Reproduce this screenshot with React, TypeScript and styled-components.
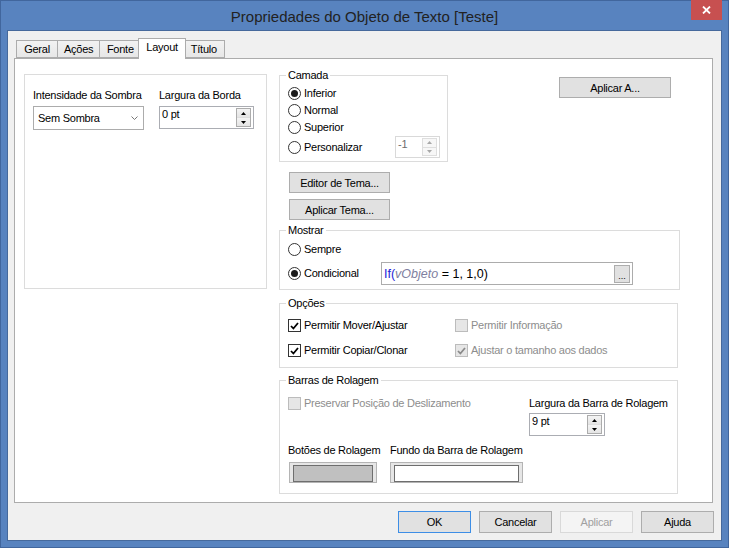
import React from 'react';
import styled, { createGlobalStyle } from 'styled-components';

const GlobalStyle = createGlobalStyle`
  html, body { margin: 0; padding: 0; }
  body {
    font-family: "Liberation Sans", Arial, sans-serif;
    font-size: 11px;
    letter-spacing: -0.25px;
    color: #000;
  }
  * { box-sizing: border-box; }
`;

const Window = styled.div`
  width: 729px;
  height: 548px;
  display: flex;
  flex-direction: column;
  background: #5883bf;
  border: 1px solid #41669d;
`;

const TitleBar = styled.div`
  height: 29px;
  display: grid;
  grid-template-columns: 1fr auto 1fr;
  align-items: center;
`;

const Title = styled.div`
  grid-column: 2;
  font-size: 15px;
  letter-spacing: 0;
  color: #222;
  padding-top: 1px;
`;

const CloseButton = styled.div`
  grid-column: 3;
  justify-self: end;
  align-self: start;
  width: 31px;
  height: 20px;
  margin: -1px 6px 0 0;
  background: #c75050;
  display: flex;
  align-items: center;
  justify-content: center;
`;

const Client = styled.div`
  margin: 0 6px 6px 6px;
  flex: 1;
  display: flex;
  flex-direction: column;
  background: #f0f0f0;
  border: 1px solid #46699c;
  padding: 7px 7px 7px 6px;
`;

const TabStrip = styled.div`
  display: flex;
  align-items: flex-end;
  height: 20px;
  padding-left: 2px;
  position: relative;
  z-index: 1;
`;

const Tab = styled.div<{ $active?: boolean }>`
  height: ${({ $active }) => ($active ? '21px' : '18px')};
  min-width: ${({ $active }) => ($active ? '46px' : '42px')};
  margin: ${({ $active }) => ($active ? '0 -2px -1px -3px' : '0 0 0 -1px')};
  padding: ${({ $active }) => ($active ? '0 7px 4px' : '0 6px')};
  display: flex;
  align-items: center;
  justify-content: center;
  border: 1px solid #acacac;
  border-bottom: ${({ $active }) => ($active ? 'none' : '1px solid #acacac')};
  background: ${({ $active }) => ($active ? '#fff' : 'linear-gradient(#f2f2f2, #e7e7e7)')};
  position: relative;
  z-index: ${({ $active }) => ($active ? 2 : 0)};

  &:first-child {
    margin-left: 0;
  }
`;

const Panel = styled.div`
  height: 445px;
  margin-right: 1px;
  background: #fff;
  border: 1px solid #acacac;
  display: flex;
  align-items: flex-start;
  gap: 12px;
  padding: 10px 0 0 9px;
`;

const LeftBox = styled.div`
  width: 243px;
  height: 215px;
  margin-top: 5px;
  border: 1px solid #dcdcdc;
  padding: 14px 0 0 8px;
  display: flex;
  gap: 15px;
  align-items: flex-start;
`;

const Field = styled.div<{ $gap?: number; $width?: number }>`
  display: flex;
  flex-direction: column;
  gap: ${({ $gap }) => $gap ?? 4}px;
  align-items: flex-start;
  width: ${({ $width }) => ($width ? `${$width}px` : 'auto')};
`;

const Label = styled.span<{ $disabled?: boolean }>`
  line-height: 13px;
  white-space: nowrap;
  color: ${({ $disabled }) => ($disabled ? '#8d8d8d' : '#000')};
`;

const Select = styled.div`
  width: 111px;
  height: 24px;
  border: 1px solid #acacac;
  background: #fff;
  display: flex;
  align-items: center;
  justify-content: space-between;
  padding: 0 5px 0 4px;
`;

const SpinWrap = styled.div<{ $width: number; $height: number; $disabled?: boolean }>`
  width: ${({ $width }) => $width}px;
  height: ${({ $height }) => $height}px;
  border: 1px solid ${({ $disabled }) => ($disabled ? '#d9d9d9' : '#abadb3')};
  background: #fff;
  display: flex;
  justify-content: space-between;
  padding: 1px;
  color: ${({ $disabled }) => ($disabled ? '#6d6d6d' : '#000')};
`;

const SpinValue = styled.span`
  line-height: 13px;
  padding-left: 1px;
`;

const SpinButtons = styled.div<{ $disabled?: boolean }>`
  width: 15px;
  display: flex;
  flex-direction: column;
  border: 1px solid ${({ $disabled }) => ($disabled ? '#dedede' : '#acacac')};
  margin: 0 1px 0 0;
`;

const SpinHalf = styled.div<{ $disabled?: boolean }>`
  flex: 1;
  display: flex;
  align-items: center;
  justify-content: center;
  background: ${({ $disabled }) => ($disabled ? '#f7f7f7' : 'linear-gradient(#f4f4f4, #e4e4e4)')};

  & + & {
    border-top: 1px solid ${({ $disabled }) => ($disabled ? '#dedede' : '#acacac')};
  }
`;

const SpinSlot = styled.div`
  margin: 0 7px 0 auto;
`;

const RightColumn = styled.div`
  width: 401px;
  display: flex;
  flex-direction: column;
  align-items: flex-start;
`;

const TopRow = styled.div`
  display: flex;
  align-items: flex-start;
`;

const GroupBox = styled.fieldset<{ $width: number; $mt?: number }>`
  width: ${({ $width }) => $width}px;
  margin: ${({ $mt }) => $mt ?? 0}px 0 0 0;
  padding: 0 0 0 8px;
  border: 1px solid #dcdcdc;
  min-inline-size: 0;

  legend {
    padding: 0 2px;
    margin-left: -2px;
    line-height: 13px;
    font-size: 11px;
  }
`;

const OptionList = styled.div<{ $pt: number; $pb: number; $gap?: number }>`
  display: flex;
  flex-direction: column;
  padding: ${({ $pt, $pb }) => `${$pt}px 0 ${$pb}px`};
  gap: ${({ $gap }) => $gap ?? 0}px;
`;

const OptionRow = styled.div<{ $height?: number }>`
  display: flex;
  align-items: center;
  min-height: ${({ $height }) => $height ?? 17}px;
`;

const Choice = styled.label<{ $disabled?: boolean }>`
  display: flex;
  align-items: center;
  gap: 3px;
  line-height: 13px;
  white-space: nowrap;
  color: ${({ $disabled }) => ($disabled ? '#8d8d8d' : '#000')};
`;

const RadioCircle = styled.span<{ $checked?: boolean }>`
  width: 13px;
  height: 13px;
  border-radius: 50%;
  border: 1px solid #333;
  background: #fff;
  display: flex;
  align-items: center;
  justify-content: center;

  &::after {
    content: '';
    width: 7px;
    height: 7px;
    border-radius: 50%;
    background: ${({ $checked }) => ($checked ? '#1b1b1b' : 'transparent')};
  }
`;

const CheckSquare = styled.span<{ $disabled?: boolean }>`
  width: 13px;
  height: 13px;
  border: 1px solid ${({ $disabled }) => ($disabled ? '#bcbcbc' : '#333')};
  background: ${({ $disabled }) => ($disabled ? '#e6e6e6' : '#fff')};
  display: flex;
  align-items: center;
  justify-content: center;
`;

const Button = styled.div<{ $width: number; $height?: number; $default?: boolean; $disabled?: boolean }>`
  width: ${({ $width }) => $width}px;
  height: ${({ $height }) => $height ?? 21}px;
  display: flex;
  align-items: center;
  justify-content: center;
  background: ${({ $disabled }) => ($disabled ? '#f4f4f4' : '#e1e1e1')};
  border: 1px solid ${({ $default, $disabled }) => ($default ? '#3d8ee6' : $disabled ? '#d9d9d9' : '#adadad')};
  color: ${({ $disabled }) => ($disabled ? '#a0a0a0' : '#000')};
  white-space: nowrap;
`;

const ApplyToButton = styled(Button)`
  margin: 8px 0 0 111px;
`;

const ThemeButton = styled(Button)<{ $mt: number }>`
  margin: ${({ $mt }) => $mt}px 0 0 10px;
`;

const ExprBox = styled.div`
  width: 252px;
  height: 23px;
  margin: 0 46px 0 auto;
  border: 1px solid #acacac;
  background: #fff;
  display: flex;
  align-items: center;
  padding: 0 2px;
  font-size: 12.5px;
  letter-spacing: 0;
`;

const Fn = styled.span`
  color: #2323d8;
`;

const Var = styled.span`
  color: #8080a0;
  font-style: italic;
`;

const EllipsisButton = styled.div`
  width: 16px;
  height: 18px;
  margin-left: auto;
  border: 1px solid #adadad;
  background: #e1e1e1;
  display: flex;
  align-items: flex-end;
  justify-content: center;
  font-size: 9px;
  line-height: 12px;
`;

const OptionsGrid = styled.div`
  display: grid;
  grid-template-columns: 167px 1fr;
  row-gap: 8px;
  padding: 7px 0 8px;

  & > * {
    height: 17px;
  }
`;

const ScrollTop = styled.div`
  display: grid;
  grid-template-columns: 241px auto;
  align-items: start;
  padding-top: 10px;
`;

const ScrollBottom = styled.div`
  display: grid;
  grid-template-columns: 102px auto;
  margin-top: 8px;
  padding-bottom: 10px;
`;

const Swatch = styled.div<{ $fill: string; $width: number; $ml?: number }>`
  width: ${({ $width }) => $width}px;
  height: 21px;
  margin-left: ${({ $ml }) => $ml ?? 0}px;
  border: 1px solid #b4b4b4;
  background: #e6e6e6;
  padding: 2px 3px;

  &::after {
    content: '';
    display: block;
    height: 100%;
    border: 1px solid #6e6e6e;
    background: ${({ $fill }) => $fill};
  }
`;

const Footer = styled.div`
  display: flex;
  justify-content: flex-end;
  gap: 8px;
  margin-top: 8px;
`;

const UpArrow = ({ color = '#000' }: { color?: string }) => (
  <svg width="5" height="3" viewBox="0 0 5 3"><path d="M0 3 L2.5 0 L5 3 Z" fill={color} /></svg>
);

const DownArrow = ({ color = '#000' }: { color?: string }) => (
  <svg width="5" height="3" viewBox="0 0 5 3"><path d="M0 0 L5 0 L2.5 3 Z" fill={color} /></svg>
);

const Spin = ({ value, width, height, disabled }: { value: string; width: number; height: number; disabled?: boolean }) => (
  <SpinWrap $width={width} $height={height} $disabled={disabled}>
    <SpinValue>{value}</SpinValue>
    <SpinButtons $disabled={disabled}>
      <SpinHalf $disabled={disabled}><UpArrow color={disabled ? '#a8a8a8' : '#000'} /></SpinHalf>
      <SpinHalf $disabled={disabled}><DownArrow color={disabled ? '#a8a8a8' : '#000'} /></SpinHalf>
    </SpinButtons>
  </SpinWrap>
);

const Radio = ({ label, checked }: { label: string; checked?: boolean }) => (
  <Choice>
    <RadioCircle $checked={checked} />
    {label}
  </Choice>
);

const Check = ({ label, checked, disabled }: { label: string; checked?: boolean; disabled?: boolean }) => (
  <Choice $disabled={disabled}>
    <CheckSquare $disabled={disabled}>
      {checked && (
        <svg width="9" height="8" viewBox="0 0 9 8">
          <path d="M1 4 L3.4 6.5 L8 1" fill="none" stroke={disabled ? '#8a8a8a' : '#000'} strokeWidth="1.8" />
        </svg>
      )}
    </CheckSquare>
    {label}
  </Choice>
);

const App = () => {
  return (
    <>
      <GlobalStyle />
      <Window>
        <TitleBar>
          <Title>Propriedades do Objeto de Texto [Teste]</Title>
          <CloseButton>
            <svg width="9" height="8" viewBox="0 0 9 8">
              <path d="M1 0.5 L8 7.5 M8 0.5 L1 7.5" stroke="#fff" strokeWidth="1.8" />
            </svg>
          </CloseButton>
        </TitleBar>
        <Client>
          <TabStrip>
            <Tab>Geral</Tab>
            <Tab>Ações</Tab>
            <Tab>Fonte</Tab>
            <Tab $active>Layout</Tab>
            <Tab>Título</Tab>
          </TabStrip>
          <Panel>
            <LeftBox>
              <Field $width={111}>
                <Label>Intensidade da Sombra</Label>
                <Select>
                  <span>Sem Sombra</span>
                  <svg width="7" height="4" viewBox="0 0 7 4">
                    <path d="M0.5 0.5 L3.5 3.5 L6.5 0.5" fill="none" stroke="#777" strokeWidth="1" />
                  </svg>
                </Select>
              </Field>
              <Field>
                <Label>Largura da Borda</Label>
                <Spin value="0 pt" width={95} height={23} />
              </Field>
            </LeftBox>

            <RightColumn>
              <TopRow>
                <GroupBox $width={169}>
                  <legend>Camada</legend>
                  <OptionList $pt={3} $pb={3}>
                    <OptionRow><Radio label="Inferior" checked /></OptionRow>
                    <OptionRow><Radio label="Normal" /></OptionRow>
                    <OptionRow><Radio label="Superior" /></OptionRow>
                    <OptionRow $height={22}>
                      <Radio label="Personalizar" />
                      <SpinSlot>
                        <Spin value="-1" width={45} height={22} disabled />
                      </SpinSlot>
                    </OptionRow>
                  </OptionList>
                </GroupBox>
                <ApplyToButton $width={112}>Aplicar A...</ApplyToButton>
              </TopRow>

              <ThemeButton $width={101} $mt={10}>Editor de Tema...</ThemeButton>
              <ThemeButton $width={101} $mt={6}>Aplicar Tema...</ThemeButton>

              <GroupBox $width={401} $mt={4}>
                <legend>Mostrar</legend>
                <OptionList $pt={4} $pb={4} $gap={4}>
                  <OptionRow><Radio label="Sempre" /></OptionRow>
                  <OptionRow $height={23}>
                    <Radio label="Condicional" checked />
                    <ExprBox>
                      <span>
                        <Fn>If(</Fn><Var>vObjeto</Var> = 1, 1,0)
                      </span>
                      <EllipsisButton>...</EllipsisButton>
                    </ExprBox>
                  </OptionRow>
                </OptionList>
              </GroupBox>

              <GroupBox $width={399} $mt={7}>
                <legend>Opções</legend>
                <OptionsGrid>
                  <Check label="Permitir Mover/Ajustar" checked />
                  <Check label="Permitir Informação" disabled />
                  <Check label="Permitir Copiar/Clonar" checked />
                  <Check label="Ajustar o tamanho aos dados" checked disabled />
                </OptionsGrid>
              </GroupBox>

              <GroupBox $width={399} $mt={6}>
                <legend>Barras de Rolagem</legend>
                <ScrollTop>
                  <Check label="Preservar Posição de Deslizamento" disabled />
                  <Field $gap={3}>
                    <Label>Largura da Barra de Rolagem</Label>
                    <Spin value="9 pt" width={76} height={23} />
                  </Field>
                </ScrollTop>
                <ScrollBottom>
                  <Field $gap={5}>
                    <Label>Botões de Rolagem</Label>
                    <Swatch $fill="#c0c0c0" $width={88} $ml={1} />
                  </Field>
                  <Field $gap={5}>
                    <Label>Fundo da Barra de Rolagem</Label>
                    <Swatch $fill="#ffffff" $width={133} />
                  </Field>
                </ScrollBottom>
              </GroupBox>
            </RightColumn>
          </Panel>
          <Footer>
            <Button $width={73} $height={22} $default>OK</Button>
            <Button $width={73} $height={22}>Cancelar</Button>
            <Button $width={73} $height={22} $disabled>Aplicar</Button>
            <Button $width={73} $height={22}>Ajuda</Button>
          </Footer>
        </Client>
      </Window>
    </>
  );
};

export default App;
